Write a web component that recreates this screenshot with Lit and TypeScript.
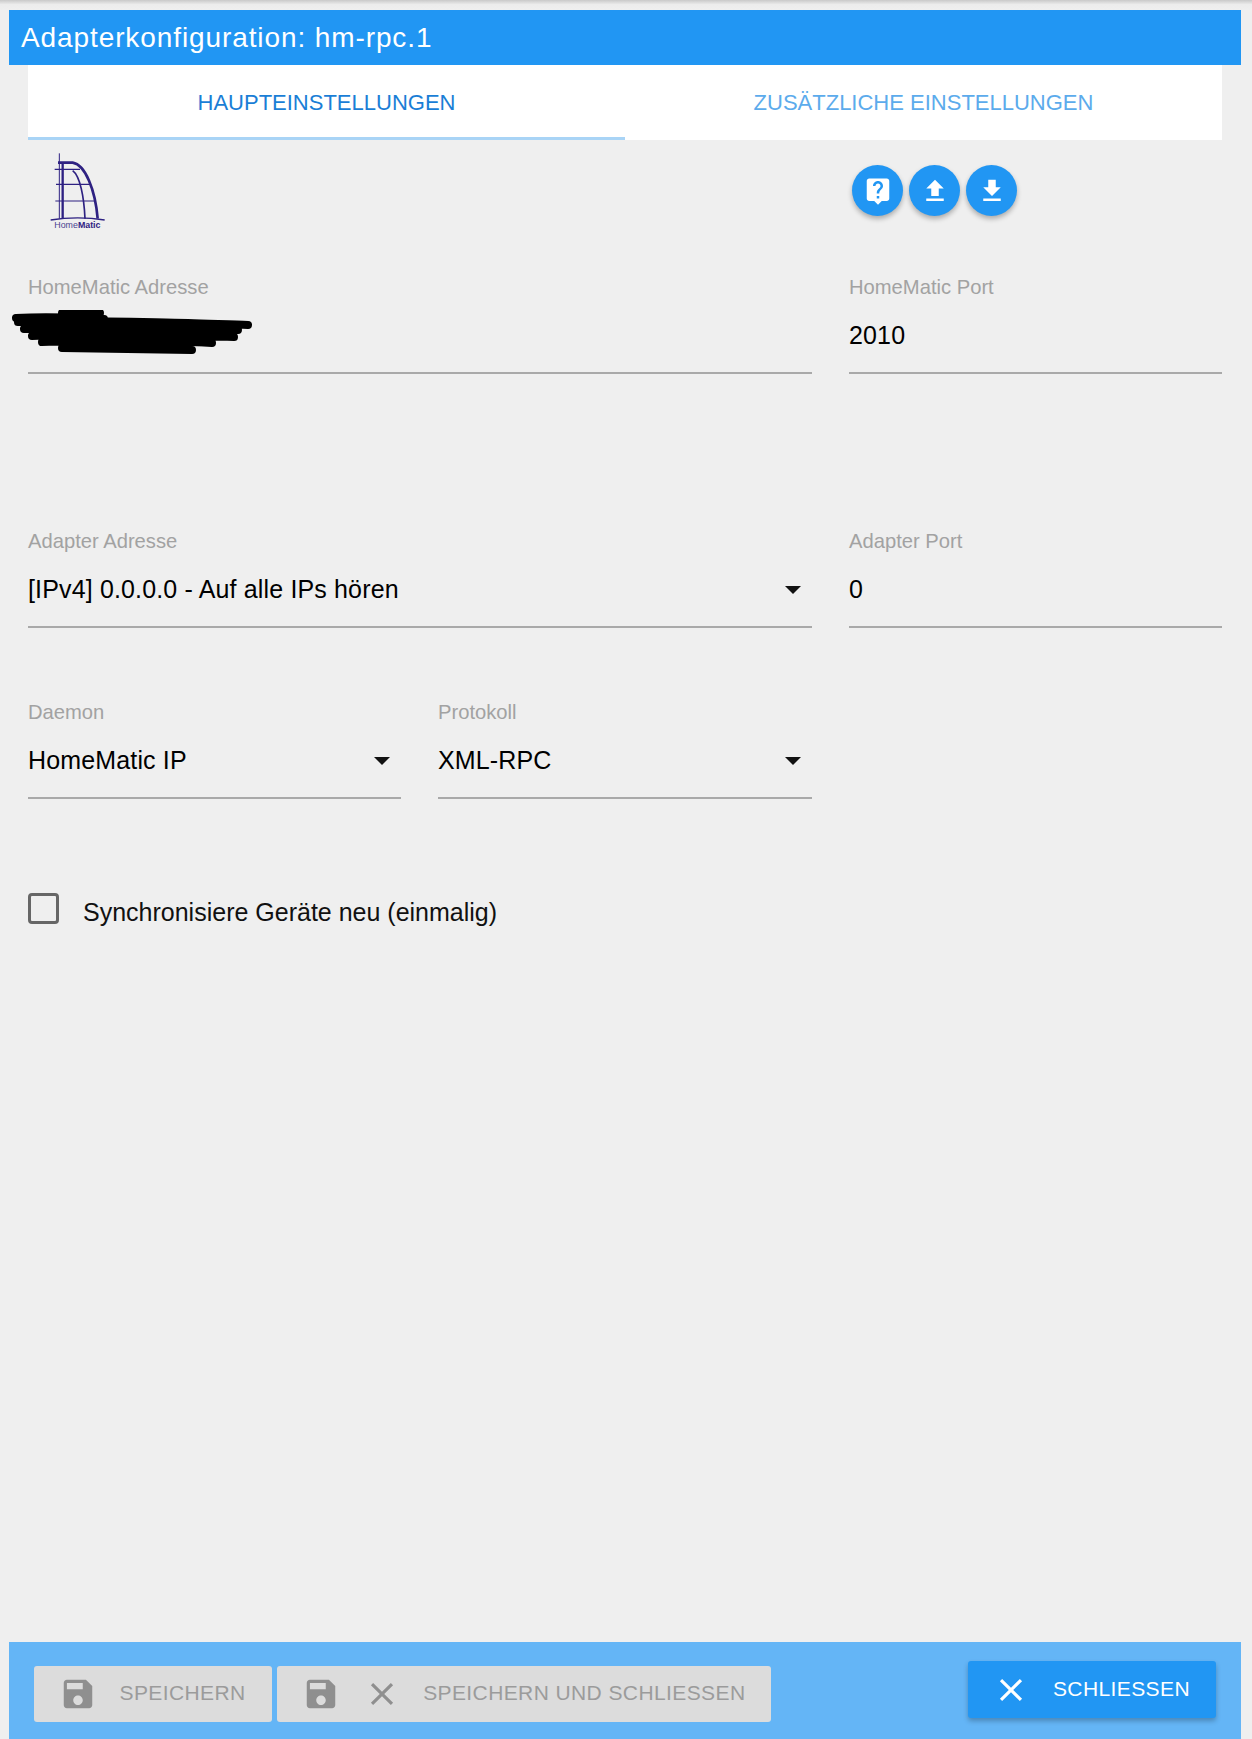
import { LitElement, html, css, svg } from 'lit'
import { customElement } from 'lit/decorators.js'

const ICONS = {
  help: 'M19 2H5c-1.11 0-2 .9-2 2v14c0 1.1.89 2 2 2h4l3 3 3-3h4c1.1 0 2-.9 2-2V4c0-1.1-.9-2-2-2zm-6 16h-2v-2h2v2zm2.07-7.75l-.9.92C13.45 11.9 13 12.5 13 14h-2v-.5c0-1.1.45-2.1 1.17-2.83l1.24-1.26c.37-.36.59-.86.59-1.41 0-1.1-.9-2-2-2s-2 .9-2 2H8c0-2.21 1.79-4 4-4s4 1.79 4 4c0 .88-.36 1.68-.93 2.25z',
  upload: 'M9 16h6v-6h4l-7-7-7 7h4zm-4 2h14v2H5z',
  download: 'M19 9h-4V3H9v6H5l7 7 7-7zM5 18v2h14v-2H5z',
  save: 'M17 3H5c-1.11 0-2 .9-2 2v14c0 1.1.89 2 2 2h14c1.1 0 2-.9 2-2V7l-4-4zm-5 16c-1.66 0-3-1.34-3-3s1.34-3 3-3 3 1.34 3 3-1.34 3-3 3zm3-10H5V5h10v4z',
  close: 'M19 6.41L17.59 5 12 10.59 6.41 5 5 6.41 10.59 12 5 17.59 6.41 19 12 13.41 17.59 19 19 17.59 13.41 12z'
}

const icon = (name: keyof typeof ICONS, cls = '') => html`
  <svg class="icon ${cls}" viewBox="0 0 24 24"><path d="${ICONS[name]}" fill="currentColor"></path></svg>`

// drawn after the zoomed crop, viewBox is 3x the crop pixels
const logo = svg`
  <g fill="none" stroke="#2e2182">
    <path d="M88 40V236" stroke-width="3"/>
    <path d="M98 66V236" stroke-width="7"/>
    <path d="M84 68H128C166 74 196 150 203 236" stroke-width="8"/>
    <path d="M128 92C150 108 162 170 165 236" stroke-width="5"/>
    <path d="M74 88H150M78 133H182M76 183H196" stroke-width="3.5"/>
    <path d="M62 240C110 232 176 232 224 240" stroke-width="4"/>
  </g>
  <text x="73" y="264" font-size="26.5" fill="#4a4390" font-family="Liberation Sans, sans-serif">Home<tspan font-weight="700" fill="#2e2182">Matic</tspan></text>`

@customElement('app-root')
export class AppRoot extends LitElement {
  static styles = css`
    :host {
      display: flex;
      flex-direction: column;
      height: 1739px;
      background: #efefef;
      font-family: "Liberation Sans", Arial, sans-serif;
      overflow: hidden;
    }
    .strip {
      height: 10px;
      background: linear-gradient(#c9c9c9, #ececec 45%, #efefef);
    }
    .icon {
      display: block;
      flex: none;
    }
    .title {
      height: 55px;
      margin: 0 11px 0 9px;
      padding-left: 12px;
      background: #2196f3;
      color: #fff;
      font-size: 28px;
      line-height: 56px;
      letter-spacing: .9px;
    }
    .content {
      flex: 1;
      margin: 0 30px 0 28px;
    }
    .tabs {
      display: flex;
      height: 75px;
      background: #fff;
    }
    .tab {
      flex: 1;
      text-align: center;
      font-size: 22px;
      line-height: 76px;
      color: #5cabec;
    }
    .tab.active {
      color: #1a7ed6;
      box-shadow: inset 0 -3px #a9d4f6;
    }
    .row {
      display: grid;
      grid-template-columns: 784px 373px;
      column-gap: 37px;
    }
    .row.split {
      grid-template-columns: 373px 374px;
      column-gap: 37px;
    }
    .toolbar {
      height: 134px;
    }
    .logo {
      display: block;
      width: 100px;
      height: 100px;
      margin-left: 2px;
    }
    .actions {
      display: flex;
      gap: 6px;
      padding: 25px 0 0 3px;
    }
    .fab {
      display: flex;
      align-items: center;
      justify-content: center;
      width: 51px;
      height: 51px;
      border-radius: 50%;
      background: #2196f3;
      color: #fff;
      box-shadow: 0 3px 5px rgba(0, 0, 0, .28);
    }
    .fab .icon {
      width: 30px;
      height: 30px;
    }
    .field {
      position: relative;
      height: 100px;
      border-bottom: 2px solid #a9a9a9;
      box-sizing: border-box;
    }
    .label {
      font-size: 20.2px;
      line-height: 26px;
      color: #a2a2a2;
    }
    .value {
      display: flex;
      align-items: center;
      justify-content: space-between;
      height: 50px;
      margin-top: 10px;
      font-size: 25px;
      letter-spacing: .15px;
      color: #000;
    }
    .value i {
      width: 0;
      height: 0;
      margin: 2px 11px 0 0;
      border: 8px solid transparent;
      border-top: 8px solid #111;
      border-bottom: 0;
    }
    .scribble {
      position: absolute;
      left: -16px;
      top: 36px;
    }
    .gap-a { margin-top: 154px; }
    .gap-b { margin-top: 71px; }
    .check {
      display: flex;
      align-items: center;
      gap: 24px;
      margin-top: 94px;
      font-size: 25px;
      color: #111;
    }
    .check span {
      padding-top: 2px;
    }
    .box {
      width: 31px;
      height: 31px;
      box-sizing: border-box;
      border: 3px solid #666;
      border-radius: 4px;
      margin-bottom: 5px;
    }
    .footer {
      display: flex;
      align-items: flex-start;
      height: 97px;
      margin: 0 11px 0 9px;
      padding: 24px 25px 0;
      box-sizing: border-box;
      background: #64b5f6;
    }
    .btn {
      display: flex;
      align-items: center;
      height: 56px;
      box-sizing: border-box;
      border-radius: 3px;
      background: #dcdcdc;
      color: #9b9b9b;
      font-size: 21px;
      letter-spacing: .4px;
      padding: 0 26px 0 25px;
      margin-right: 5px;
    }
    .btn .icon {
      width: 38px;
      height: 38px;
      color: #8f8f8f;
    }
    .btn .label-text {
      margin: -2px 0 0 22.5px;
    }
    .btn .icon + .icon {
      margin-left: 23px;
    }
    .btn.close {
      margin: -5px 0 0 auto;
      height: 57px;
      padding: 0 26px 0 24px;
      background: #2196f3;
      color: #fff;
      box-shadow: 0 3px 5px rgba(0, 0, 0, .25);
    }
    .btn.close .icon {
      color: #fff;
    }
  `

  field (label: string, value: string, select = false) {
    return html`
      <div class="field">
        <div class="label">${label}</div>
        <div class="value"><span>${value}</span>${select ? html`<i></i>` : ''}</div>
      </div>`
  }

  render () {
    return html`
      <div class="strip"></div>
      <div class="title">Adapterkonfiguration: hm-rpc.1</div>
      <div class="content">
        <div class="tabs">
          <div class="tab active">HAUPTEINSTELLUNGEN</div>
          <div class="tab">ZUSÄTZLICHE EINSTELLUNGEN</div>
        </div>
        <div class="row toolbar">
          <svg class="logo" viewBox="0 0 300 300">${logo}</svg>
          <div class="actions">
            <div class="fab">${icon('help')}</div>
            <div class="fab">${icon('upload')}</div>
            <div class="fab">${icon('download')}</div>
          </div>
        </div>
        <div class="row">
          <div class="field">
            <div class="label">HomeMatic Adresse</div>
            <svg class="scribble" width="240" height="46" viewBox="0 0 240 46">
              <path d="M30 12L200 14L190 36L60 40Z" fill="#000"></path>
              <path d="M4 8C40 6 70 8 92 9M50 3H88M6 12C60 10 120 12 176 13C200 14 222 14 236 15M12 19C70 16 150 18 226 20M20 26C80 23 150 24 222 27M30 32C90 30 150 30 200 33M50 38L180 40"
                fill="none" stroke="#000" stroke-width="8" stroke-linecap="round"></path>
            </svg>
          </div>
          ${this.field('HomeMatic Port', '2010')}
        </div>
        <div class="row gap-a">
          ${this.field('Adapter Adresse', '[IPv4] 0.0.0.0 - Auf alle IPs hören', true)}
          ${this.field('Adapter Port', '0')}
        </div>
        <div class="row split gap-b">
          ${this.field('Daemon', 'HomeMatic IP', true)}
          ${this.field('Protokoll', 'XML-RPC', true)}
        </div>
        <div class="check">
          <div class="box"></div>
          <span>Synchronisiere Geräte neu (einmalig)</span>
        </div>
      </div>
      <div class="footer">
        <div class="btn">${icon('save')}<span class="label-text">SPEICHERN</span></div>
        <div class="btn">${icon('save')}${icon('close')}<span class="label-text">SPEICHERN UND SCHLIESSEN</span></div>
        <div class="btn close">${icon('close')}<span class="label-text">SCHLIESSEN</span></div>
      </div>
    `
  }
}
